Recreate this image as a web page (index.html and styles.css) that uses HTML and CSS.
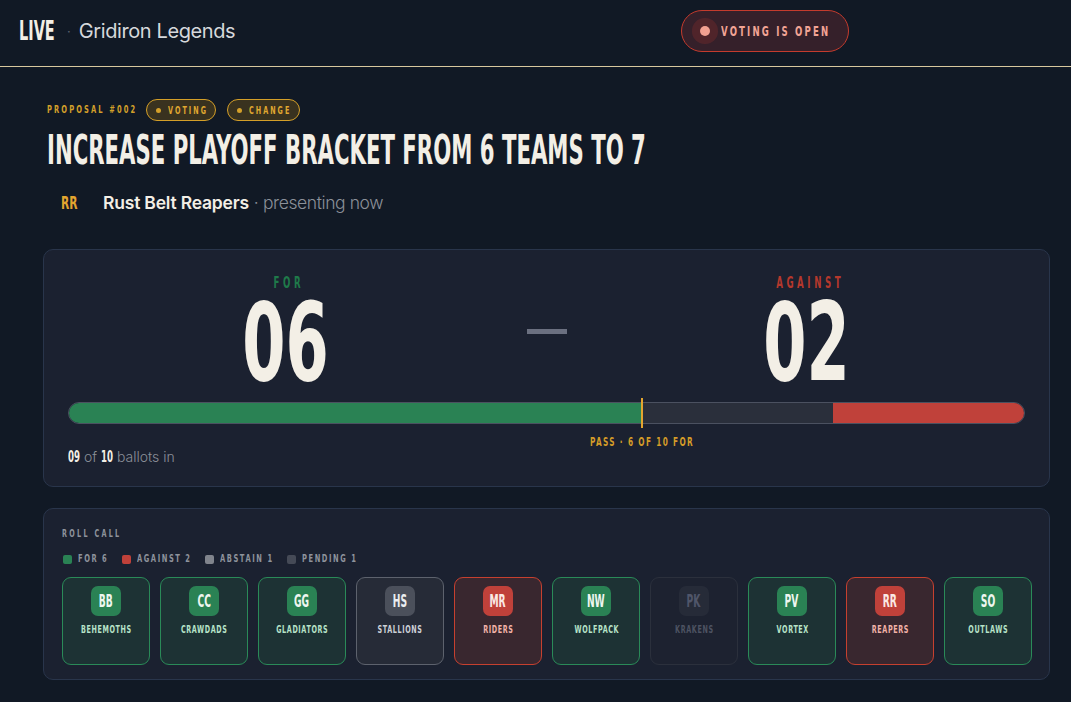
FILE: index.html
```html
<!DOCTYPE html>
<html lang="en">
<head>
<meta charset="utf-8">
<title>Gridiron Legends — Live Vote</title>
<link rel="stylesheet" href="styles.css">
</head>
<body>
<header class="topbar">
  <div class="brand">
    <span class="live"><span class="cx">LIVE</span></span>
    <span class="brand-dot">·</span>
    <span class="league">Gridiron Legends</span>
  </div>
  <div class="status-pill">
    <span class="status-dot"></span>
    <span class="status-text"><span class="cx">VOTING IS OPEN</span></span>
  </div>
  <div class="topbar-end"></div>
</header>

<main class="page">
  <div class="meta">
    <span class="proposal-id"><span class="cx">PROPOSAL #002</span></span>
    <span class="tag tag-voting"><span class="tag-dot"></span><span class="tag-text"><span class="cx">VOTING</span></span></span>
    <span class="tag tag-change"><span class="tag-dot"></span><span class="tag-text"><span class="cx">CHANGE</span></span></span>
  </div>
  <h1 class="title"><span class="cx">INCREASE PLAYOFF BRACKET FROM 6 TEAMS TO 7</span></h1>
  <div class="presenter">
    <span class="presenter-abbr"><span class="cx">RR</span></span>
    <span class="presenter-name">Rust Belt Reapers</span>
    <span class="presenter-note">· presenting now</span>
  </div>

  <section class="card score">
    <div class="tally">
      <div class="side">
        <div class="side-label for"><span class="cc">FOR</span></div>
        <div class="big"><span class="cc">06</span></div>
      </div>
      <div class="dash"></div>
      <div class="side">
        <div class="side-label against"><span class="cc">AGAINST</span></div>
        <div class="big"><span class="cc">02</span></div>
      </div>
    </div>
    <div class="bar">
      <div class="seg seg-for" style="width:60%"></div>
      <div class="seg seg-rest" style="width:20%"></div>
      <div class="seg seg-against" style="width:20%"></div>
      <div class="marker" style="left:60%">
        <span class="pass">PASS · 6 OF 10 FOR</span>
      </div>
    </div>
    <div class="ballots"><span class="num"><span class="cx">09</span></span> of <span class="num"><span class="cx">10</span></span> ballots in</div>
  </section>

  <section class="card roll">
    <div class="roll-title"><span class="cx">ROLL CALL</span></div>
    <div class="legend">
      <span class="legend-item li-1"><span class="sw sw-for"></span><span class="cx">FOR 6</span></span>
      <span class="legend-item li-2"><span class="sw sw-against"></span><span class="cx">AGAINST 2</span></span>
      <span class="legend-item li-3"><span class="sw sw-abstain"></span><span class="cx">ABSTAIN 1</span></span>
      <span class="legend-item li-4"><span class="sw sw-pending"></span><span class="cx">PENDING 1</span></span>
    </div>
    <div class="tiles">
      <div class="tile t-for"><div class="av"><span class="cc">BB</span></div><div class="tname"><span class="cc">BEHEMOTHS</span></div></div>
      <div class="tile t-for"><div class="av"><span class="cc">CC</span></div><div class="tname"><span class="cc">CRAWDADS</span></div></div>
      <div class="tile t-for"><div class="av"><span class="cc">GG</span></div><div class="tname"><span class="cc">GLADIATORS</span></div></div>
      <div class="tile t-abstain"><div class="av"><span class="cc">HS</span></div><div class="tname"><span class="cc">STALLIONS</span></div></div>
      <div class="tile t-against"><div class="av"><span class="cc">MR</span></div><div class="tname"><span class="cc">RIDERS</span></div></div>
      <div class="tile t-for"><div class="av"><span class="cc">NW</span></div><div class="tname"><span class="cc">WOLFPACK</span></div></div>
      <div class="tile t-pending"><div class="av"><span class="cc">PK</span></div><div class="tname"><span class="cc">KRAKENS</span></div></div>
      <div class="tile t-for"><div class="av"><span class="cc">PV</span></div><div class="tname"><span class="cc">VORTEX</span></div></div>
      <div class="tile t-against"><div class="av"><span class="cc">RR</span></div><div class="tname"><span class="cc">REAPERS</span></div></div>
      <div class="tile t-for"><div class="av"><span class="cc">SO</span></div><div class="tname"><span class="cc">OUTLAWS</span></div></div>
    </div>
  </section>
</main>
</body>
</html>
```

FILE: styles.css
```css
* { box-sizing: border-box; }
html, body { margin: 0; padding: 0; }
body {
  background: #111925;
  color: #f3efe6;
  font-family: Inter, "Noto Sans", "Liberation Sans", sans-serif;
  width: 1071px;
  height: 702px;
  overflow: hidden;
}

/* condensed display face: DejaVu Sans Condensed, squeezed horizontally */
.live, .status-text, .proposal-id, .tag-text, .title, .presenter-abbr, .side-label,
.big, .pass, .ballots .num, .roll-title, .legend, .av, .tname {
  font-family: "DejaVu Sans Condensed", "DejaVu Sans", sans-serif;
  font-weight: 700;
  white-space: nowrap;
}
.cx {
  display: inline-block;
  transform: scaleX(var(--sx, 0.68));
  transform-origin: left center;
  white-space: nowrap;
}
.cc {
  display: inline-block;
  transform: scaleX(var(--sx, 0.68));
  transform-origin: center center;
  white-space: nowrap;
}

/* ---------- top bar ---------- */
.topbar {
  height: 67px;
  border-bottom: 1px solid #d8c89e;
  display: flex;
  align-items: center;
  padding: 0 19px 4px;
}
.brand { display: flex; align-items: center; }
.live { font-size: 26px; line-height: 30px; color: #f3efe6; width: 36px; --sx: 0.62; }
.brand-dot { color: #5c6270; font-size: 13px; margin: 0 8px 0 12px; }
.league { font-size: 20px; color: #d6d8dc; font-weight: 400; letter-spacing: -0.4px; }

.status-pill {
  margin-left: auto;
  height: 42px;
  width: 168px;
  border: 1px solid #c43b2d;
  border-radius: 21px;
  background: #35202a;
  display: flex;
  align-items: center;
  padding-left: 18px;
}
.status-dot {
  flex: none;
  width: 10px; height: 10px; border-radius: 50%;
  background: #f2a091;
  box-shadow: 0 0 0 8px rgba(192, 57, 43, 0.20);
  margin-right: 11px;
}
.status-text { font-size: 14px; line-height: 16px; color: #f2a495; letter-spacing: 3.2px; width: 108px; }
.topbar-end { width: 203px; }

/* ---------- proposal header ---------- */
.page { padding: 32px 21px 0 43px; }

.meta { display: flex; align-items: center; padding-left: 4px; height: 22px; }
.proposal-id { font-size: 11px; line-height: 12px; color: #d4a02a; letter-spacing: 3.1px; width: 99px; }
.tag {
  height: 22px;
  display: inline-flex; align-items: center;
  border: 1px solid #d49f28;
  background: #39321f;
  border-radius: 11px;
  padding-left: 9px;
  color: #e0a830;
  margin-right: 11px;
}
.tag-voting { width: 70px; }
.tag-change { width: 73px; }
.tag-text { font-size: 10.5px; line-height: 12px; letter-spacing: 3px; width: 40px; }
.tag-dot { flex: none; width: 5px; height: 5px; border-radius: 50%; background: #d4a02a; margin-right: 7px; }

.title {
  margin: 7px 0 0 4px;
  font-size: 40px;
  line-height: 44px;
  height: 44px;
  color: #f3efe6;
  overflow: hidden;
  --sx: 0.59;
}

.presenter { display: flex; align-items: baseline; margin: 19px 0 0 18px; height: 24px; line-height: 24px; }
.presenter-abbr { font-size: 17px; color: #e3a52f; width: 42px; --sx: 0.7; }
.presenter-name { font-size: 17.5px; font-weight: 600; color: #f3efe6; letter-spacing: -0.2px; }
.presenter-note { font-size: 17.5px; font-weight: 300; color: #8b9099; margin-left: 5px; letter-spacing: -0.4px; }

/* ---------- cards ---------- */
.card {
  background: #1b2130;
  border: 1px solid #29354b;
  border-radius: 10px;
}

.score { margin-top: 34px; padding: 24px 24px 0; height: 238px; }

.tally { display: grid; grid-template-columns: 1fr 85px 1fr; align-items: start; }
.side { text-align: center; }
.side-label { font-size: 15px; line-height: 18px; letter-spacing: 5.6px; --sx: 0.64; }
.side-label .cc { margin-right: -5.6px; }
.side-label.for { color: #1f7a4a; }
.side-label.against { color: #b5382c; }
.big { font-size: 108px; line-height: 97px; color: #f3efe6; margin-top: 2px; --sx: 0.64; }
.dash { width: 40px; height: 5px; background: #6b7080; margin: 55px auto 0; }

.bar {
  position: relative;
  margin-top: 11px;
  height: 22px;
  border: 1px solid #4b5160;
  border-radius: 11px;
  display: flex;
}
.seg { height: 100%; }
.seg-for { background: #2a8254; border-radius: 10px 0 0 10px; }
.seg-rest { background: #2a2f3b; }
.seg-against { background: #c0413a; border-radius: 0 10px 10px 0; }
.marker {
  position: absolute;
  top: -5px; bottom: -5px;
  width: 2px;
  margin-left: -1px;
  background: #e3a52f;
}
.pass {
  position: absolute;
  top: 37px;
  left: 1px;
  transform: translateX(-50%) scaleX(0.68);
  font-size: 12px;
  line-height: 14px;
  letter-spacing: 2px;
  color: #d49c28;
}

.ballots { margin-top: 23px; font-size: 14px; line-height: 20px; color: #8b9099; font-weight: 300; }
.ballots .num { font-size: 16.5px; color: #f3efe6; font-weight: 700; display: inline-block; width: 12px; --sx: 0.58; }

.roll { margin-top: 21px; padding: 18px 18px 0 18px; height: 172px; }
.roll-title { font-size: 10.5px; line-height: 12px; letter-spacing: 3.4px; color: #8e939c; }
.legend { display: flex; margin-top: 14px; font-size: 11px; line-height: 12px; letter-spacing: 2.3px; color: #8e939c; padding-left: 1px; }
.legend-item { display: inline-flex; align-items: center; }
.li-1 { width: 59px; }
.li-2 { width: 83px; }
.li-3 { width: 82px; }
.li-4 { width: 80px; }
.sw { flex: none; width: 9px; height: 9px; border-radius: 2px; margin-right: 6px; }
.sw-for { background: #2a8254; }
.sw-against { background: #c0413a; }
.sw-abstain { background: #80848c; }
.sw-pending { background: #454a56; }

.tiles { display: flex; gap: 10px; margin-top: 12px; }
.tile {
  flex: none;
  width: 88px; height: 88px;
  border: 1px solid;
  border-radius: 9px;
  display: flex; flex-direction: column; align-items: center;
  padding-top: 8px;
}
.av {
  width: 30px; height: 30px; border-radius: 7px;
  display: flex; align-items: center; justify-content: center;
  font-size: 17px; line-height: 20px;
  --sx: 0.6;
}
.tname { margin-top: 7px; font-size: 10.5px; line-height: 12px; letter-spacing: 0.9px; }
.tname .cc { margin-right: -0.9px; }

.t-for { background: #1d3234; border-color: #2a8a58; }
.t-for .av { background: #2a8254; color: #eef6f0; }
.t-for .tname { color: #b7e3c8; }
.t-against { background: #39272f; border-color: #c6402f; }
.t-against .av { background: #c0413a; color: #fbe9e5; }
.t-against .tname { color: #f2b2a8; }
.t-abstain { background: #262b37; border-color: #5d626d; }
.t-abstain .av { background: #4b505b; color: #eceef0; }
.t-abstain .tname { color: #ccd0d6; }
.t-pending { background: #1d2230; border-color: #2b303c; }
.t-pending .av { background: #262b38; color: #50566a; }
.t-pending .tname { color: #4d5362; }
```
